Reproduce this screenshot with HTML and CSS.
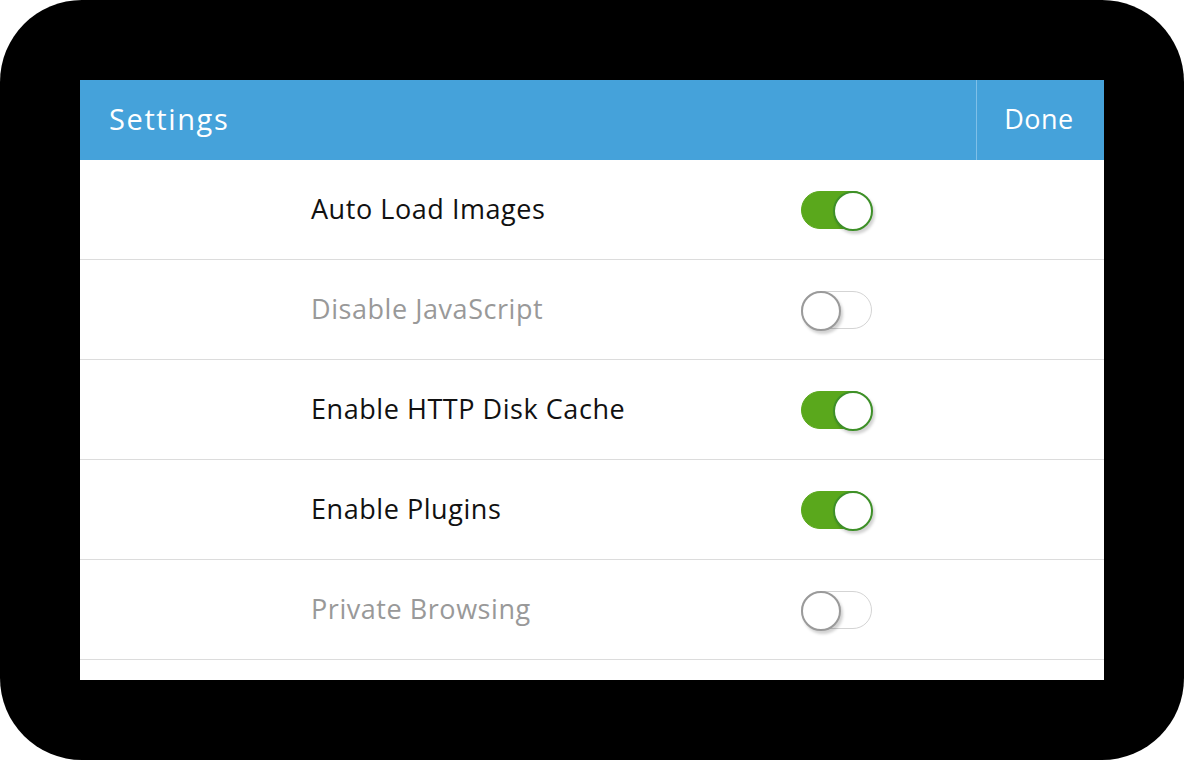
FILE: index.html
```html
<!DOCTYPE html>
<html>
<head>
<meta charset="utf-8">
<link rel="stylesheet" href="styles.css">
</head>
<body>
<div class="device">
  <div class="screen">
    <header class="bar">
      <div class="title">Settings</div>
      <div class="done">Done</div>
    </header>
    <div class="list">
      <div class="row"><div class="inner"><span class="label">Auto Load Images</span><span class="toggle on"><span class="knob"></span></span></div></div>
      <div class="row"><div class="inner"><span class="label off-text">Disable JavaScript</span><span class="toggle"><span class="knob"></span></span></div></div>
      <div class="row"><div class="inner"><span class="label">Enable HTTP Disk Cache</span><span class="toggle on"><span class="knob"></span></span></div></div>
      <div class="row"><div class="inner"><span class="label">Enable Plugins</span><span class="toggle on"><span class="knob"></span></span></div></div>
      <div class="row"><div class="inner"><span class="label off-text">Private Browsing</span><span class="toggle"><span class="knob"></span></span></div></div>
    </div>
  </div>
</div>
</body>
</html>
```
FILE: styles.css
```css
html { background: #fff; }
body { margin: 0; font-family: "Open Sans", "Noto Sans", sans-serif; }
.device {
  width: 1184px; height: 760px; box-sizing: border-box;
  background: #000; border-radius: 82px;
  padding: 80px;
}
.screen { width: 1024px; height: 600px; background: #fff; overflow: hidden; }
.bar { height: 80px; background: #45a2da; display: flex; color: #fff; }
.title {
  flex: 1; font-size: 29px; letter-spacing: 1.6px; line-height: 77px;
  padding-left: 29px;
}
.done {
  border-left: 1px solid #7fc0e8;
  font-size: 27px; letter-spacing: 0.5px; line-height: 77px; text-align: center;
  padding-right: 3px; box-sizing: border-box; width: 128px;
}
.row { height: 99px; border-bottom: 1px solid #dcdcdc; }
.inner {
  width: 561px; margin-left: 231px; height: 100%;
  display: flex; align-items: center; justify-content: space-between;
}
.label {
  font-size: 27px; letter-spacing: 0.55px; color: #111;
  line-height: 36px; margin-top: -1px;
}
.label.off-text { color: #999; }
.toggle {
  position: relative; width: 71px; height: 38px; box-sizing: border-box;
  border-radius: 19px; border: 1.5px solid #d4d4d4; background: #fff;
  margin-top: 1px;
}
.toggle.on { background: #5aa81c; border-color: #5aa81c; }
.knob {
  position: absolute; top: -1.5px; left: -1.5px;
  width: 40px; height: 40px; box-sizing: border-box;
  border-radius: 50%; background: #fff; border: 2px solid #9a9a9a;
  box-shadow: 2px 3px 3px rgba(0,0,0,0.18);
}
.toggle.on .knob { left: auto; right: -1.5px; border-color: #3e9028; }
```
